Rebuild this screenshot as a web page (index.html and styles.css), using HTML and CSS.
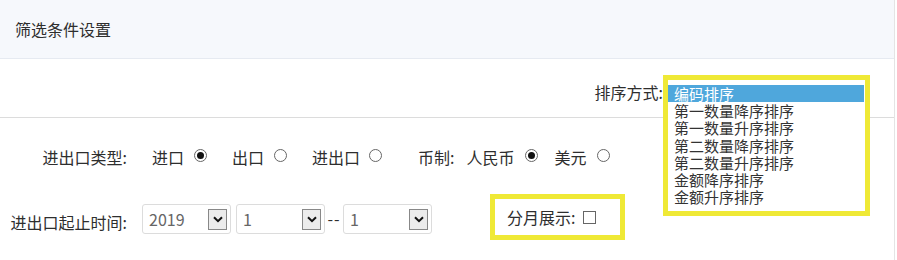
FILE: index.html
```html
<!DOCTYPE html>
<html lang="zh">
<head>
<meta charset="utf-8">
<title>筛选条件设置</title>
<link rel="stylesheet" href="styles.css">
</head>
<body>
<div class="panel">
  <div class="header">筛选条件设置</div>
  <div class="sort-row">
    <span class="sort-label">排序方式:</span>
    <div class="sort-anchor">
      <ul class="listbox">
        <li class="sel">编码排序</li>
        <li>第一数量降序排序</li>
        <li>第一数量升序排序</li>
        <li>第二数量降序排序</li>
        <li>第二数量升序排序</li>
        <li>金额降序排序</li>
        <li>金额升序排序</li>
      </ul>
    </div>
  </div>
  <div class="form">
    <div class="row row1">
      <span class="label">进出口类型:</span>
      <span class="opt">进口<span class="radio on"></span></span>
      <span class="opt">出口<span class="radio"></span></span>
      <span class="opt">进出口<span class="radio r9"></span></span>
      <span class="cur-label">币制:</span>
      <span class="opt rmb">人民币<span class="radio on"></span></span>
      <span class="opt usd">美元<span class="radio"></span></span>
    </div>
    <div class="row row2">
      <span class="label label2">进出口起止时间:</span>
      <div class="select s1"><span>2019</span><span class="arrow"><svg width="10" height="7" viewBox="0 0 10 7"><path d="M1 1.2 L5 5.2 L9 1.2" fill="none" stroke="#111" stroke-width="2"/></svg></span></div>
      <div class="select s2"><span>1</span><span class="arrow"><svg width="10" height="7" viewBox="0 0 10 7"><path d="M1 1.2 L5 5.2 L9 1.2" fill="none" stroke="#111" stroke-width="2"/></svg></span></div>
      <span class="dash">--</span>
      <div class="select"><span>1</span><span class="arrow"><svg width="10" height="7" viewBox="0 0 10 7"><path d="M1 1.2 L5 5.2 L9 1.2" fill="none" stroke="#111" stroke-width="2"/></svg></span></div>
      <div class="monthly"><span>分月展示:</span><span class="checkbox"></span></div>
    </div>
  </div>
</div>
</body>
</html>
```
FILE: styles.css
```css
* { box-sizing: border-box; }
body {
  margin: 0;
  font-family: "Noto Sans CJK SC", "Microsoft YaHei", sans-serif;
  color: #2e2e2e;
  background: #fff;
}
.panel {
  width: 895px;
  height: 260px;
  border-right: 1px solid #e4e4e4;
}
.header {
  height: 59px;
  background: #f6f8fc;
  border-bottom: 1px solid #e6eaf1;
  display: flex;
  align-items: center;
  padding-left: 15px;
  font-size: 16px;
}
.sort-row {
  height: 59px;
  border-bottom: 1px solid #dcdcdc;
  display: flex;
  justify-content: flex-end;
  align-items: flex-start;
  padding: 24px 24px 0 0;
  font-size: 16px;
}
.sort-label { line-height: 19px; }
.sort-anchor {
  position: relative;
  width: 207px;
  height: 19px;
}
.listbox {
  position: absolute;
  left: 0;
  top: -8px;
  width: 207px;
  height: 141px;
  margin: 0;
  padding: 5px 1px 0 0;
  list-style: none;
  border: 5px solid #efe936;
  background: #fff;
  font-size: 15px;
  line-height: 17.2px;
  color: #333;
  z-index: 2;
}
.listbox li { padding-left: 6px; white-space: nowrap; height: 17.2px; }
.listbox li.sel { background: #4fa7dc; color: #fff; }
.form {
  padding: 29px 0 0 10px;
  font-size: 16px;
}
.row { display: flex; }
.row1 { height: 20px; align-items: center; line-height: 20px; }
.label { width: 117px; text-align: right; }
.opt { display: flex; align-items: center; margin-left: 25px; }
.radio {
  width: 13px;
  height: 13px;
  margin-left: 10px;
  margin-bottom: 4px;
  border: 1px solid #666;
  border-radius: 50%;
  display: inline-flex;
  align-items: center;
  justify-content: center;
}
.radio.on::after {
  content: "";
  width: 7px;
  height: 7px;
  border-radius: 50%;
  background: #111;
}
.radio.r9 { margin-left: 9px; }
.cur-label { margin-left: 36px; }
.opt.rmb { margin-left: 12px; }
.opt.usd { margin-left: 17px; }
.row2 { margin-top: 27px; height: 46px; align-items: flex-start; }
.label2 { margin-top: 18px; line-height: 20px; }
.select {
  width: 89px;
  height: 30px;
  margin-top: 10px;
  border: 1px solid #dcdcdc;
  border-radius: 3px;
  display: flex;
  align-items: center;
  justify-content: space-between;
  padding: 0 3px 0 6px;
  color: #666;
}
.select.s1 { margin-left: 15px; }
.select.s2 { margin-left: 5px; }
.arrow {
  width: 19px;
  height: 21px;
  border: 1px solid #888;
  background: #ececec;
  display: flex;
  align-items: center;
  justify-content: center;
}
.dash {
  width: 18px;
  margin-top: 14px;
  line-height: 20px;
  text-align: center;
  letter-spacing: 1px;
}
.monthly {
  width: 135px;
  height: 46px;
  margin-left: 58px;
  border: 5px solid #efe936;
  padding-left: 12px;
  display: flex;
  align-items: center;
}
.checkbox {
  width: 13px;
  height: 13px;
  margin-left: 8px;
  border: 1px solid #666;
}
```
